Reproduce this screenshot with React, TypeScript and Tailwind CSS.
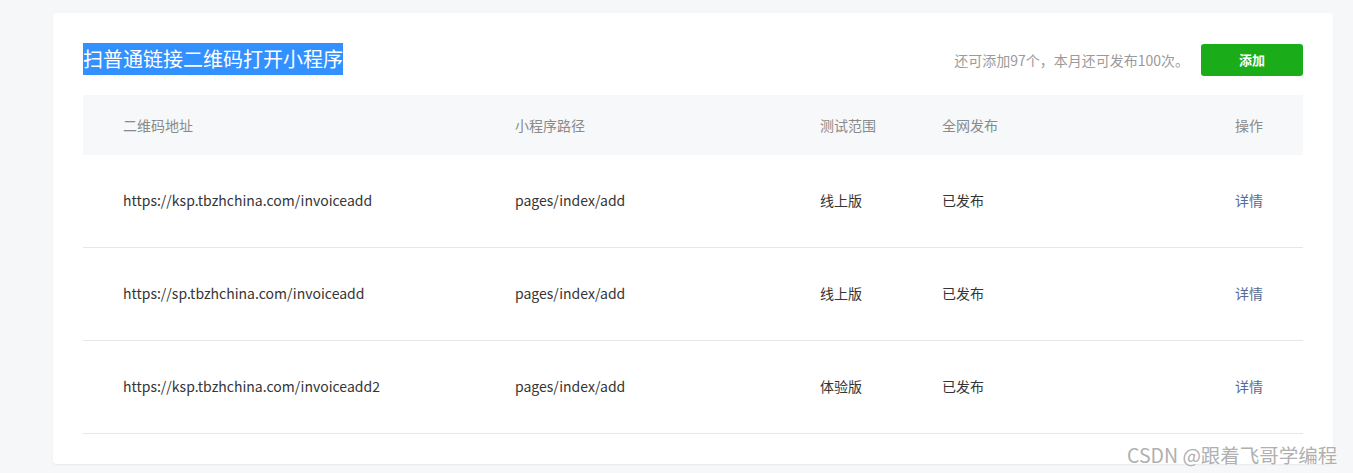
import React from "react";

const rows = [
  { url: "https://ksp.tbzhchina.com/invoiceadd", path: "pages/index/add", scope: "线上版", pub: "已发布" },
  { url: "https://sp.tbzhchina.com/invoiceadd", path: "pages/index/add", scope: "线上版", pub: "已发布" },
  { url: "https://ksp.tbzhchina.com/invoiceadd2", path: "pages/index/add", scope: "体验版", pub: "已发布" },
];

const grid = "grid grid-cols-[392px_305px_122px_1fr_auto] items-center";

export default function App() {
  return (
    <div
      className="relative w-[1353px] h-[473px] bg-[#f6f7f9] pt-[13px] pl-[53px] overflow-hidden"
      style={{ fontFamily: '"Noto Sans CJK SC", "Liberation Sans", sans-serif' }}
    >
      <div className="w-[1280px] h-[451px] bg-white rounded-[4px] shadow-[0_1px_2px_rgba(0,0,0,0.06)] px-[30px] pt-[30px]">
        <div className="flex items-start justify-between h-[52px]">
          <h2 className="bg-[#3390ff] text-white text-[20px] leading-[32px] h-[32px] font-normal">
            扫普通链接二维码打开小程序
          </h2>
          <div className="flex items-center mt-[1px]">
            <span className="text-[14px] text-[#9a9a9a] mr-[12px]">还可添加97个，本月还可发布100次。</span>
            <button className="w-[102px] h-[32px] rounded-[3px] bg-[#1aad19] text-white text-[13px] font-bold">
              添加
            </button>
          </div>
        </div>
        <div className={`${grid} h-[60px] bg-[#f6f8f9] text-[14px] text-[#8a8a8a]`}>
          <div className="pl-[40px]">二维码地址</div>
          <div className="pl-[40px]">小程序路径</div>
          <div className="pl-[40px]">测试范围</div>
          <div className="pl-[40px]">全网发布</div>
          <div className="pr-[40px]">操作</div>
        </div>
        {rows.map((r, i) => (
          <div key={i} className={`${grid} h-[93px] border-b border-[#e7e7eb] text-[14px] text-[#353535]`}>
            <div className="pl-[40px] pb-[1px]">{r.url}</div>
            <div className="pl-[40px] pb-[1px]">{r.path}</div>
            <div className="pl-[40px] pb-[1px]">{r.scope}</div>
            <div className="pl-[40px] pb-[1px]">{r.pub}</div>
            <div className="pr-[40px] pb-[1px] text-[#576b95]">详情</div>
          </div>
        ))}
      </div>
      <div className="absolute left-[1127px] top-[441px] text-[19.5px] leading-[28px] text-[#b0b0b0] [text-shadow:0_0_2px_#fff]">
        CSDN @跟着飞哥学编程
      </div>
    </div>
  );
}
